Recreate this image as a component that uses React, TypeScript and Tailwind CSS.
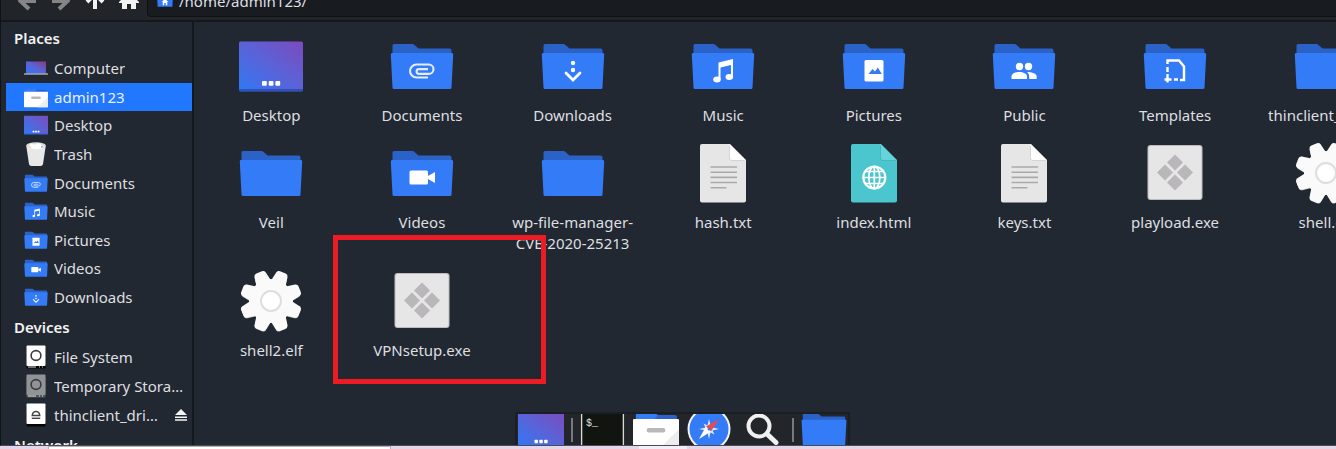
import type { ReactNode } from "react";

type Glyph = "clip" | "down" | "music" | "image" | "people" | "template" | "video" | "home";

const glyphs: Record<Glyph, ReactNode> = {
  clip: (
    <path
      d="M38 43.500H26.500a6.500 6.500 0 0 1 0-13H38.800a4.700 4.700 0 0 1 0 9.400H29a2.400 2.400 0 0 1 0-4.800H38"
      fill="none"
      stroke="#e4edff"
      strokeWidth="2.100"
    />
  ),
  down: (
    <g fill="#fff">
      <circle cx="32" cy="29" r="2.200" />
      <circle cx="32" cy="36" r="2.200" />
      <path d="M25 39l7 7 7-7" fill="none" stroke="#fff" strokeWidth="2.800" strokeLinecap="round" />
    </g>
  ),
  music: (
    <g fill="#fff">
      <path d="M27.500 28.500L42 25v5.500L29.500 33.500V45h-2z" />
      <path d="M40 28h2v15h-2z" />
      <ellipse cx="26" cy="45.500" rx="3.800" ry="2.900" />
      <ellipse cx="38.300" cy="43" rx="3.800" ry="2.900" />
    </g>
  ),
  image: (
    <g>
      <rect x="22.500" y="26" width="19" height="21.500" rx="1.500" fill="#fff" />
      <path d="M26.500 40l4-5 2.500 2.500 2.800-4 4 6.500z" fill="#347bf8" />
    </g>
  ),
  people: (
    <g fill="#fff">
      <circle cx="27.500" cy="32.500" r="3.700" />
      <circle cx="36.500" cy="32.500" r="3.700" />
      <path d="M19.500 45v-2.500c0-3 4-4.500 7.800-4.500s7.700 1.500 7.700 4.500V45z" />
      <path d="M35 38c5 0 9.700 1.500 9.700 4.500V45h-7.500v-2.500c0-2-1-3.500-2.200-4.500z" />
    </g>
  ),
  template: (
    <g fill="none" stroke="#fff" strokeWidth="2.400">
      <path d="M24.500 30V26.500H36l5 6V46h-4" />
      <path d="M24.500 33v5M24.500 40v8.500M21.500 45.500h7M31 45.500h4" />
    </g>
  ),
  video: (
    <g fill="#fff">
      <rect x="19.500" y="29.500" width="18.500" height="14" rx="1.500" />
      <path d="M37 35.500l8-4.500v11l-8-4.500z" />
    </g>
  ),
  home: <path d="M32 23L19 36h4v13h6V40h6v9h6V36h4z" fill="#fff" />,
};

function Folder({ glyph, className = "size-16" }: { glyph?: Glyph; className?: string }) {
  return (
    <svg viewBox="0 0 64 64" className={`${className} shrink-0`} aria-hidden="true">
      <path d="M2.500 22V11.500q0-1.500 1.500-1.500H22.500q1 0 2 1l4 3.500H59.500q2 0 2 2V22z" fill="#2a62c8" />
      <path d="M2 19H62q1.300 0 1.200 1.500L61.500 53.500q0 1.500-1.500 1.500H4q-1.500 0-1.500-1.500L.8 20.500Q.7 19 2 19z" fill="#347bf8" />
      {glyph && glyphs[glyph]}
    </svg>
  );
}

function Gradient({ id, end = "#7b4bbd" }: { id: string; end?: string }) {
  return (
    <linearGradient id={id} x1="0" y1="1" x2="1" y2="0">
      <stop offset="0" stopColor="#2f78f5" />
      <stop offset="0.5" stopColor="#5a63d8" />
      <stop offset="1" stopColor={end} />
    </linearGradient>
  );
}

function DesktopIcon({ id, className = "size-16" }: { id: string; className?: string }) {
  return (
    <svg viewBox="0 0 64 64" className={`${className} shrink-0`} aria-hidden="true">
      <defs>
        <Gradient id={id} />
      </defs>
      <rect x="0" y="7.500" width="64" height="50" rx="1.500" fill={`url(#${id})`} />
      <path d="M0 55h64v1q0 1.500-1.500 1.500h-61Q0 57.500 0 56z" fill="#1f3f9a" opacity=".6" />
      <g fill="#fff">
        <rect x="23" y="47" width="4.800" height="4.800" rx="1" />
        <rect x="29.700" y="47" width="4.800" height="4.800" rx="1" />
        <rect x="36.400" y="47" width="4.800" height="4.800" rx="1" />
      </g>
    </svg>
  );
}

function ComputerIcon() {
  return (
    <svg viewBox="0 0 24 24" className="size-6 shrink-0" aria-hidden="true">
      <defs>
        <Gradient id="computer" end="#8d3880" />
      </defs>
      <rect x="2" y="5.500" width="20" height="12" fill="url(#computer)" />
      <path d="M0 17.500h24v1H0z" fill="#e5e5e5" />
    </svg>
  );
}

function FilesIcon({ className }: { className: string }) {
  return (
    <svg viewBox="0 0 64 64" className={`${className} shrink-0`} aria-hidden="true">
      <path d="M4 22V11q0-2 2-2h24l5 4h23q3 0 3 3v6z" fill="#347bf8" />
      <path d="M35 13h23q3 0 3 3v2H30z" fill="#2a62c8" />
      <path d="M1.500 18h61q1.500 0 1.500 1.500V57q0 2-2 2H2q-2 0-2-2V19.500Q0 18 1.500 18z" fill="#fff" />
      <path d="M64 32v27H37z" fill="#ededed" />
      <rect x="19" y="30.500" width="26" height="6.500" rx="3" fill="#b9b9b9" />
    </svg>
  );
}

function TrashIcon() {
  return (
    <svg viewBox="0 0 24 24" className="size-6 shrink-0" aria-hidden="true">
      <path d="M2.200 3.500L5 22q.3 2 2.500 2h9q2.200 0 2.500-2l2.800-18.500z" fill="#e8e8e8" />
      <ellipse cx="12" cy="3.500" rx="9.800" ry="3.200" fill="#dcdcdc" />
      <path d="M4.500 4.500l2-3 4 1 4-1.500 3 2 2 1.500-2 2q-6 1.500-11 0z" fill="#fff" />
      <path d="M4.500 4.500h2l1 2z" fill="#f2c94c" />
      <path d="M17 4l2 .5-1.500 1.500z" fill="#3aa6b0" />
    </svg>
  );
}

function DriveIcon({ kind }: { kind: "disk" | "temp" | "eject" }) {
  const face = kind === "temp" ? "#929397" : "#ffffff";
  return (
    <svg viewBox="0 0 24 24" className="size-6 shrink-0" aria-hidden="true">
      <rect x="2.500" y="3" width="19" height="20.500" rx="1" fill={kind === "temp" ? "#55585d" : "#050505"} />
      <rect x="2.500" y="0.500" width="19" height="20.500" rx="1" fill={face} />
      {kind === "eject" ? (
        <g fill="none" stroke="#444" strokeWidth="1.400">
          <path d="M8.200 12.500q.5-4 3.800-4t3.800 4z" />
          <path d="M7.800 15.300h8.400" />
        </g>
      ) : (
        <g>
          <circle cx="12" cy="10.500" r="4.900" fill="none" stroke="#3a3c40" strokeWidth="1.600" />
          <path d="M4 21.500h8v1H4zM15 21.500h1v1h-1zM18 21.500h1v1h-1z" fill="#ddd" />
        </g>
      )}
    </svg>
  );
}

function DocIcon({ web = false }: { web?: boolean }) {
  return (
    <svg viewBox="0 0 64 64" className="size-16 shrink-0" aria-hidden="true">
      <path d="M11 3h28l16 16v40.500q0 2-2 2H11q-2 0-2-2V5q0-2 2-2z" fill={web ? "#4bc6cf" : "#e6e6e6"} />
      <path d="M38.500 3L55 19.500H41q-2.500 0-2.500-2.500z" fill={web ? "#65d3dc" : "#fff"} />
      <path d="M38.500 5v12q0 2.500 2.500 2.500H54" fill="none" stroke="#000" strokeOpacity=".12" />
      {web ? (
        <g fill="none" stroke="#fff" strokeWidth="1.700">
          <circle cx="32.300" cy="36.500" r="11" strokeWidth="2.200" />
          <ellipse cx="32.300" cy="36.500" rx="5.500" ry="11" />
          <path d="M32.300 25.500v22M21.500 36.500h22M23.500 30.500h17.600M23.500 42.500h17.600" />
        </g>
      ) : (
        <path d="M19.500 26h26.500M19.500 31.200h26.500M19.500 36.400h26.500M19.500 41.500h26.500M19.500 46.700h16" stroke="#aaa" strokeWidth="1.600" />
      )}
    </svg>
  );
}

function ExeIcon() {
  return (
    <svg viewBox="0 0 64 64" className="size-16 shrink-0" aria-hidden="true">
      <rect x="4.500" y="4" width="55" height="55" rx="3" fill="#bdbdbd" />
      <rect x="5.500" y="5" width="53" height="53" rx="2.500" fill="#e6e6e6" />
      <path
        d="M32 13.500l8 8-8 8-8-8zM32 33.500l8 8-8 8-8-8zM22 23.500l8 8-8 8-8-8zM42 23.500l8 8-8 8-8-8z"
        fill="#b9b7b9"
      />
    </svg>
  );
}

const TEETH = [22.5, 67.5, 112.5, 157.5, 202.5, 247.5, 292.5, 337.5];

function GearIcon() {
  return (
    <svg viewBox="0 0 64 64" className="size-16 shrink-0" aria-hidden="true">
      <g fill="#cfcfcf" transform="translate(0 1)">
        {TEETH.map((a) => (
          <path key={a} d="M24.500 14l1.500-10q.5-2.500 3-2.500h6q2.500 0 3 2.500l1.500 10z" transform={`rotate(${a} 32 32)`} />
        ))}
      </g>
      <g fill="#fafafa">
        <circle cx="32" cy="32" r="22" />
        {TEETH.map((a) => (
          <path key={a} d="M24 14l2-10.500q.5-2.500 3-2.500h6q2.500 0 3 2.500l2 10.500z" transform={`rotate(${a} 32 32)`} />
        ))}
      </g>
      <circle cx="32" cy="32" r="10" fill="#fff" stroke="#dedede" strokeWidth="2" />
    </svg>
  );
}

function TerminalIcon() {
  return (
    <svg viewBox="0 0 46 46" className="size-[46px] shrink-0" aria-hidden="true">
      <rect x="0" y="0" width="45" height="46" fill="#2c302d" />
      <path d="M1 0h1.500v46H1zM42.500 0H44v46h-1.500z" fill="#dadada" />
      <rect x="2.500" y="0" width="40" height="46" fill="#101510" />
      <text x="6" y="12" fill="#e4e4e4" fontSize="10" fontFamily="Liberation Mono, monospace">
        $_
      </text>
    </svg>
  );
}

function CompassIcon() {
  return (
    <svg viewBox="0 0 46 46" className="size-[46px] shrink-0" aria-hidden="true">
      <circle cx="23" cy="23" r="21.500" fill="#f4f4f4" />
      <circle cx="23" cy="23" r="19.500" fill="#347bf8" />
      <path
        d="M23 13l1.500 6.500 4-2-2 4L33 23l-6.500 1.500 2 4-4-2L23 33l-1.500-6.500-4 2 2-4L13 23l6.500-1.500-2-4 4 2z"
        fill="#dce9ff"
      />
      <path d="M33 13L20 20.500l5 5z" fill="#f04848" />
      <path d="M13 33l7-12.500 5 5z" fill="#fff" />
      <circle cx="23" cy="23" r="1.500" fill="#347bf8" />
    </svg>
  );
}

function SearchIcon() {
  return (
    <svg viewBox="0 0 46 46" className="size-[46px] shrink-0" aria-hidden="true">
      <circle cx="20" cy="20" r="10.500" fill="none" stroke="#f0f0f0" strokeWidth="4" />
      <path d="M28 28l9 8.500" stroke="#f0f0f0" strokeWidth="5" strokeLinecap="round" />
    </svg>
  );
}

function NavIcon({ path, muted = false, filled = false }: { path: string; muted?: boolean; filled?: boolean }) {
  const color = muted ? "#858585" : "#f2f2f2";
  return (
    <svg viewBox="0 0 20 20" className="size-5" aria-hidden="true">
      <path d={path} fill={filled ? color : "none"} stroke={filled ? "none" : color} strokeWidth="4" />
    </svg>
  );
}

const places: { name: string; icon: ReactNode }[] = [
  { name: "Computer", icon: <ComputerIcon /> },
  { name: "admin123", icon: <FilesIcon className="size-6" /> },
  { name: "Desktop", icon: <DesktopIcon id="desk-side" className="size-6" /> },
  { name: "Trash", icon: <TrashIcon /> },
  { name: "Documents", icon: <Folder glyph="clip" className="size-6" /> },
  { name: "Music", icon: <Folder glyph="music" className="size-6" /> },
  { name: "Pictures", icon: <Folder glyph="image" className="size-6" /> },
  { name: "Videos", icon: <Folder glyph="video" className="size-6" /> },
  { name: "Downloads", icon: <Folder glyph="down" className="size-6" /> },
];

const files: { name: string; icon: ReactNode }[] = [
  { name: "Desktop", icon: <DesktopIcon id="desk-main" /> },
  { name: "Documents", icon: <Folder glyph="clip" /> },
  { name: "Downloads", icon: <Folder glyph="down" /> },
  { name: "Music", icon: <Folder glyph="music" /> },
  { name: "Pictures", icon: <Folder glyph="image" /> },
  { name: "Public", icon: <Folder glyph="people" /> },
  { name: "Templates", icon: <Folder glyph="template" /> },
  { name: "thinclient_drives", icon: <Folder /> },
  { name: "Veil", icon: <Folder /> },
  { name: "Videos", icon: <Folder glyph="video" /> },
  { name: "wp-file-manager-CVE-2020-25213", icon: <Folder /> },
  { name: "hash.txt", icon: <DocIcon /> },
  { name: "index.html", icon: <DocIcon web /> },
  { name: "keys.txt", icon: <DocIcon /> },
  { name: "playload.exe", icon: <ExeIcon /> },
  { name: "shell.elf", icon: <GearIcon /> },
  { name: "shell2.elf", icon: <GearIcon /> },
  { name: "VPNsetup.exe", icon: <ExeIcon /> },
];

function SideItem({ name, icon, active = false }: { name: string; icon: ReactNode; active?: boolean }) {
  return (
    <a
      href="#"
      className={`flex min-h-0 min-w-0 flex-1 items-center gap-1.5 pl-[18px] pr-1 leading-5 ${active ? "bg-[#2277ff] text-[#e8f0ff]" : ""}`}
    >
      {icon}
      <span className="truncate">{name}</span>
    </a>
  );
}

function SideHeading({ children }: { children: ReactNode }) {
  return <h2 className="flex h-8 shrink-0 items-center pl-2 font-semibold text-[#f2f2f2]">{children}</h2>;
}

export default function App() {
  return (
    <div className="relative flex h-screen flex-col overflow-hidden bg-[#222831] font-['Noto_Sans','Open_Sans',sans-serif] text-[15px] text-[#dedfe0]">
      <div className="flex min-h-0 flex-1 flex-col border-b border-l border-b-[#4a4d55] border-l-[#101214]">
        <header className="flex h-[22px] shrink-0 items-end overflow-hidden border-b-2 border-[#14171b] bg-[#212429] pb-[3px]">
          <nav className="flex h-8 items-center gap-3.5 pl-4 pr-2" aria-label="Navigation">
            <button aria-label="Back">
              <NavIcon muted path="M12 2L3.500 10l8.500 8M4 10h15" />
            </button>
            <button aria-label="Forward">
              <NavIcon muted path="M8 2l8.500 8L8 18M16 10H1" />
            </button>
            <button aria-label="Up">
              <NavIcon path="M2 11l8-8 8 8M10 4v14" />
            </button>
            <button aria-label="Home">
              <NavIcon filled path="M10 1L0 11v1h3v6h5v-5h4v5h5v-6h3v-1z" />
            </button>
          </nav>
          <label className="flex h-8 flex-1 items-center gap-1.5 rounded-l border border-r-0 border-[#0e1013] bg-[#181b20] pl-[9px]">
            <Folder glyph="home" className="size-4" />
            <span className="sr-only">Location</span>
            <input className="min-w-0 flex-1 bg-transparent outline-none" defaultValue="/home/admin123/" />
          </label>
        </header>

        <div className="flex min-h-0 flex-1">
          <aside className="ml-[5px] flex w-[188px] shrink-0 flex-col overflow-hidden border-r-2 border-[#15191e]">
            <SideHeading>Places</SideHeading>
            <nav className="flex h-[257px] shrink-0 flex-col" aria-label="Places">
              {places.map((p) => (
                <SideItem key={p.name} {...p} active={p.name === "admin123"} />
              ))}
            </nav>
            <SideHeading>Devices</SideHeading>
            <nav className="flex h-[86px] shrink-0 flex-col" aria-label="Devices">
              <SideItem name="File System" icon={<DriveIcon kind="disk" />} />
              <SideItem name="Temporary Storage" icon={<DriveIcon kind="temp" />} />
              <div className="flex min-w-0 flex-1 items-stretch">
                <SideItem name="thinclient_drives" icon={<DriveIcon kind="eject" />} />
                <button className="flex w-6 items-center justify-end pr-[5px]" aria-label="Eject">
                  <svg viewBox="0 0 12 12" className="size-3 shrink-0" aria-hidden="true">
                    <path d="M6 0l6 6H0zM0 7.500h12V9H0zM0 10.200h12v1.500H0z" fill="#f4f4f4" />
                  </svg>
                </button>
              </div>
            </nav>
            <SideHeading>Network</SideHeading>
          </aside>

          <main className="min-w-0 flex-1 overflow-hidden pl-0.5 pt-3">
            <ul className="grid w-[1205px] grid-cols-8">
              {files.map((f) => (
                <li key={f.name} className="flex justify-center pb-[15px]">
                  <button className="flex w-[140px] flex-col items-center gap-[7px] leading-[21px]">
                    {f.icon}
                    <span>{f.name}</span>
                  </button>
                </li>
              ))}
            </ul>
          </main>
        </div>
      </div>

      <div className="absolute left-[333px] top-[235px] h-[149px] w-[213px] border-5 border-[#ed1c24]" />

      <div className="absolute bottom-1 left-[515px] h-[33px] border-2 border-b-0 border-[#1b1e22] bg-[#22252a]">
        <div className="flex h-[31px] items-start gap-[7px] overflow-hidden px-px">
          <button className="-mt-2" aria-label="Show desktop">
            <DesktopIcon id="desk-dock" className="size-[46px]" />
          </button>
          <span className="mt-1 h-6 w-0.5 bg-[#77797c]" />
          <button aria-label="Terminal">
            <TerminalIcon />
          </button>
          <button className="-mt-2" aria-label="Files">
            <FilesIcon className="size-[46px]" />
          </button>
          <button className="-mt-2" aria-label="Browser">
            <CompassIcon />
          </button>
          <button className="-mt-2" aria-label="Search">
            <SearchIcon />
          </button>
          <span className="mt-1 h-6 w-0.5 bg-[#77797c]" />
          <button className="-mt-2" aria-label="Home folder">
            <Folder className="size-[46px]" />
          </button>
        </div>
      </div>

      <footer className="flex h-[3px] shrink-0 bg-[#e4d6e8]">
        <div className="ml-12 w-[343px] border border-b-0 border-[#b5b0b8] bg-white" />
        <div className="ml-[248px] w-12 bg-[#f4eef8]" />
      </footer>
    </div>
  );
}
